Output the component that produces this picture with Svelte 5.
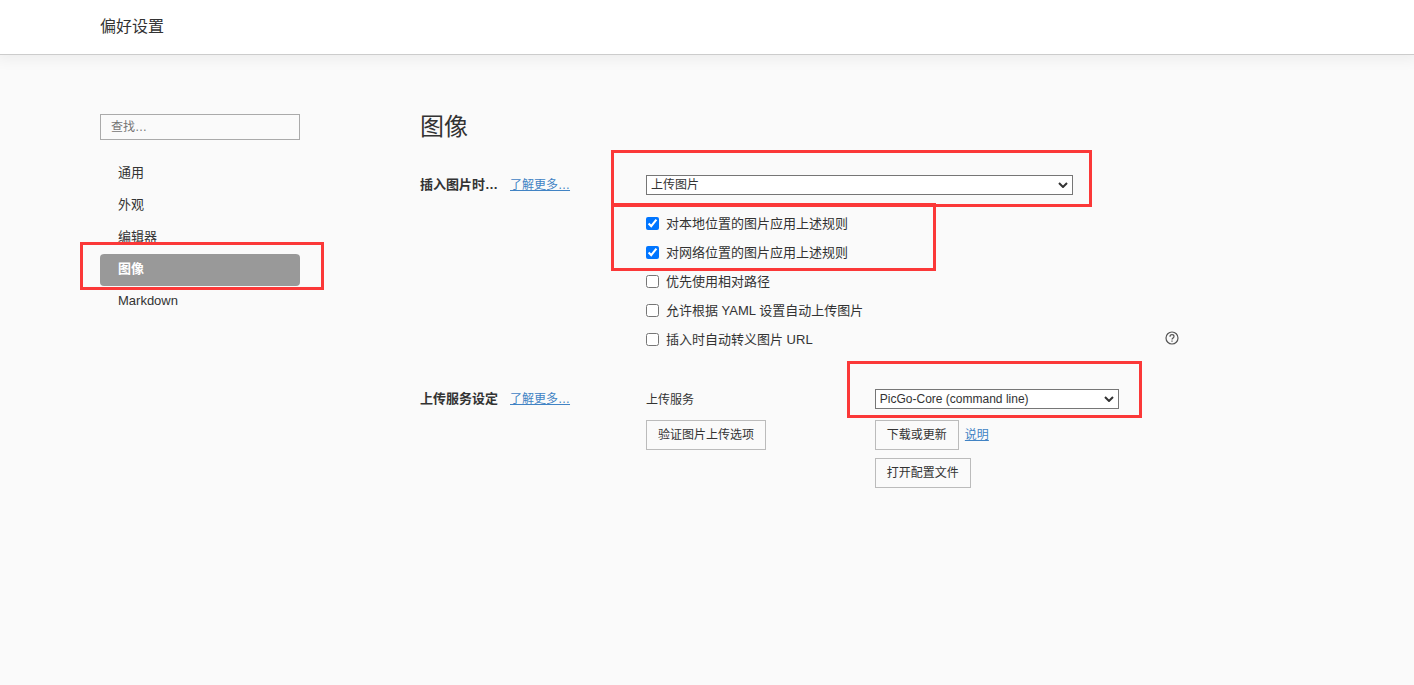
<script>
  let menu = ["通用", "外观", "编辑器", "图像", "Markdown"];
  let active = "图像";
  let search = "";

  let actions = ["上传图片", "无特殊操作", "复制图片到当前文件夹"];
  let action = "上传图片";

  let services = ["PicGo-Core (command line)", "PicGo (app)", "Custom Command"];
  let service = "PicGo-Core (command line)";

  let rules = [
    { text: "对本地位置的图片应用上述规则", on: true },
    { text: "对网络位置的图片应用上述规则", on: true },
  ];
  let options = [
    { text: "优先使用相对路径", on: false },
    { text: "允许根据 YAML 设置自动上传图片", on: false },
    { text: "插入时自动转义图片 URL", on: false, help: true },
  ];
</script>

<header>偏好设置</header>

<div class="page">
  <aside>
    <input class="search" type="text" aria-label="查找" placeholder="查找…" bind:value={search} />
    <nav>
      {#each menu as name}
        <button class="item" class:active={name === active} on:click={() => (active = name)}>
          {name}
          {#if name === "图像"}<span class="mark mark-nav"></span>{/if}
        </button>
      {/each}
    </nav>
  </aside>

  <main>
    <h1>图像</h1>

    <section>
      <div class="title">
        <label for="action">插入图片时…</label>
        <a href="#insert">了解更多…</a>
      </div>
      <div class="body">
        <div class="select">
          <select id="action" bind:value={action}>
            {#each actions as a}<option>{a}</option>{/each}
          </select>
          <svg class="arrow" viewBox="0 0 10 6"><path d="M1 1l4 4 4-4" /></svg>
          <span class="mark mark-action"></span>
        </div>
        <div class="rules">
          {#each rules as r}
            <label class="check"><input type="checkbox" bind:checked={r.on} />{r.text}</label>
          {/each}
          <span class="mark mark-rules"></span>
        </div>
        {#each options as o}
          <div class="line">
            <label class="check"><input type="checkbox" bind:checked={o.on} />{o.text}</label>
            {#if o.help}
              <button class="help" aria-label="帮助">
                <svg viewBox="0 0 14 14">
                  <circle cx="7" cy="7" r="6" />
                  <path d="M5 5.7C5 4.4 5.8 3.7 7 3.7s2 .8 2 1.8c0 1.4-2 1.5-2 3.1M7 9.5v1.2" />
                </svg>
              </button>
            {/if}
          </div>
        {/each}
      </div>
    </section>

    <section>
      <div class="title">
        <strong>上传服务设定</strong>
        <a href="#upload">了解更多…</a>
      </div>
      <div class="body upload">
        <div class="stack">
          <label class="name" for="service">上传服务</label>
          <button class="btn">验证图片上传选项</button>
        </div>
        <div class="stack">
          <div class="select">
            <select id="service" bind:value={service}>
              {#each services as s}<option>{s}</option>{/each}
            </select>
            <svg class="arrow" viewBox="0 0 10 6"><path d="M1 1l4 4 4-4" /></svg>
            <span class="mark mark-service"></span>
          </div>
          <div class="buttons">
            <button class="btn">下载或更新</button>
            <a href="#help">说明</a>
          </div>
          <button class="btn second">打开配置文件</button>
        </div>
      </div>
    </section>
  </main>
</div>

<style>
  :global(body) {
    background: #fafafa;
    color: #333;
    font-family: "Liberation Sans", "Noto Sans CJK SC", sans-serif;
    font-size: 13px;
    line-height: 20px;
  }

  header {
    height: 54px;
    padding: 0 100px;
    background: white;
    border-bottom: 1px solid #ccc;
    box-shadow: 0 0 14px 4px rgba(0, 0, 0, 0.06);
    font-size: 16px;
    line-height: 54px;
  }

  .page {
    display: flex;
    gap: 120px;
    max-width: 1080px;
    padding: 59px 100px;
  }

  aside {
    flex: 0 0 200px;
  }

  main {
    flex: 1;
  }

  button,
  input,
  select {
    box-sizing: border-box;
    margin: 0;
    color: inherit;
    font-family: inherit;
    font-size: 12px;
  }

  button {
    cursor: pointer;
  }

  .search {
    display: block;
    width: 100%;
    height: 26px;
    padding: 0 10px;
    border: 1px solid #aaa;
    background: transparent;
  }

  .search::placeholder {
    color: #757575;
  }

  nav {
    margin-top: 18px;
  }

  .item {
    display: block;
    position: relative;
    width: 100%;
    height: 32px;
    padding: 0 18px 2px;
    border: none;
    border-radius: 4px;
    background: transparent;
    font-size: 13px;
    line-height: 20px;
    text-align: left;
  }

  .item.active {
    background: #999;
    color: white;
    font-weight: bold;
  }

  h1 {
    margin: 0 0 34px;
    font-size: 24px;
    font-weight: normal;
    line-height: 26px;
  }

  section {
    display: flex;
    margin-bottom: 34px;
  }

  .title {
    display: flex;
    flex: 0 0 226px;
    gap: 12px;
    line-height: 22px;
  }

  .title label,
  .title strong {
    flex: 0 0 78px;
    font-weight: bold;
    white-space: nowrap;
  }

  a {
    color: #4183c4;
    font-size: 12px;
  }

  .body {
    flex: 1;
  }

  .select {
    position: relative;
    width: 80%;
    margin-top: 1px;
  }

  select {
    display: block;
    width: 100%;
    height: 20px;
    padding: 0 4px;
    border: 1px solid #767676;
    border-radius: 0;
    background: white;
    appearance: none;
  }

  .arrow {
    position: absolute;
    top: 7px;
    right: 5px;
    width: 10px;
    height: 6px;
    fill: none;
    stroke: #333;
    stroke-width: 2;
    pointer-events: none;
  }

  .rules {
    position: relative;
    margin-top: 14px;
  }

  .line {
    display: flex;
    align-items: center;
    justify-content: space-between;
  }

  .check {
    display: flex;
    align-items: center;
    gap: 7px;
    height: 29px;
  }

  .check input {
    width: 13px;
    height: 13px;
  }

  .help {
    width: 16px;
    height: 18px;
    padding: 0 1px 4px;
    border: none;
    background: transparent;
  }

  .help svg {
    display: block;
    width: 14px;
    height: 14px;
    fill: none;
    stroke: #555;
    stroke-width: 1.2;
  }

  .upload {
    display: grid;
    grid-template-columns: 3fr 4fr;
  }

  .stack {
    display: flex;
    flex-direction: column;
    align-items: flex-start;
  }

  .name {
    margin: 2px 0 10px;
    font-size: 12px;
  }

  .btn {
    height: 30px;
    padding: 0 11px;
    border: 1px solid #bbb;
    background: transparent;
    line-height: 20px;
  }

  .buttons {
    display: flex;
    align-items: center;
    gap: 6px;
    margin-top: 11px;
  }

  .second {
    margin-top: 8px;
  }

  /* red highlight frames */
  .mark {
    position: absolute;
    border: 3px solid #fb3838;
    pointer-events: none;
  }

  .mark-nav {
    inset: -12px -24px -4px -20px;
  }

  .mark-action {
    inset: -25px -19px -12px -35px;
  }

  .mark-rules {
    inset: -6px auto -4px -35px;
    width: 319px;
  }

  .mark-service {
    inset: -28px -23px -9px -28px;
  }
</style>
